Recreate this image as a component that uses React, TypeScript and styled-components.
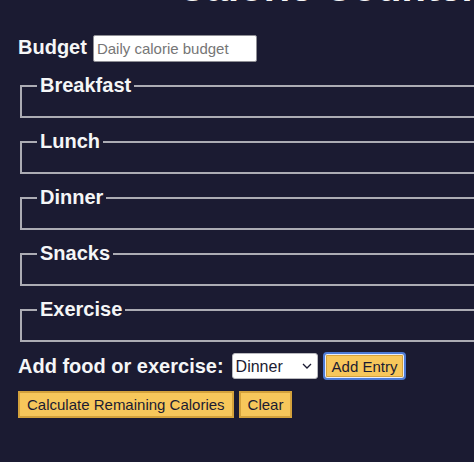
import React from "react";
import styled, { createGlobalStyle } from "styled-components";

const GlobalStyle = createGlobalStyle`
  html,
  body {
    margin: 0;
    padding: 0;
    overflow: hidden;
    background-color: #1b1b32;
  }

  body {
    color: #f5f6f7;
    font-family: "Liberation Sans", Arial, Helvetica, sans-serif;
  }
`;

const meals = ["Breakfast", "Lunch", "Dinner", "Snacks", "Exercise"];

const App = () => {
  return (
    <>
      <GlobalStyle />
      <Page>
        <Title>Calorie Counter</Title>
        <Container>
          <BudgetRow>
            <Label htmlFor="budget">Budget</Label>
            <BudgetInput
              id="budget"
              type="number"
              placeholder="Daily calorie budget"
            />
          </BudgetRow>
          <FieldsetList>
            {meals.map((meal) => (
              <Fieldset key={meal}>
                <Legend>{meal}</Legend>
              </Fieldset>
            ))}
          </FieldsetList>
          <AddRow>
            <Label htmlFor="entry-dropdown">Add food or exercise:</Label>
            <SelectWrapper>
              <Select id="entry-dropdown" defaultValue="dinner">
                <option value="breakfast">Breakfast</option>
                <option value="lunch">Lunch</option>
                <option value="dinner">Dinner</option>
                <option value="snacks">Snacks</option>
                <option value="exercise">Exercise</option>
              </Select>
              <Chevron viewBox="0 0 10 6" aria-hidden="true">
                <path d="M1 1l4 4 4-4" />
              </Chevron>
            </SelectWrapper>
            <Button type="button" $focused>
              Add Entry
            </Button>
          </AddRow>
          <ButtonRow>
            <Button type="button">Calculate Remaining Calories</Button>
            <Button type="button">Clear</Button>
          </ButtonRow>
        </Container>
      </Page>
    </>
  );
};

// the page is scrolled a little, so the title only peeks in at the top
const Page = styled.div`
  width: 618px;
  margin: -36px 0 0 18px;
`;

const Title = styled.h1`
  margin: 0 0 25px;
  font-size: 40px;
  line-height: 46px;
  font-weight: bold;
  text-align: center;
  white-space: nowrap;
`;

const Container = styled.div`
  display: flex;
  flex-direction: column;
`;

const Label = styled.label`
  font-size: 20px;
  line-height: 23px;
  font-weight: bold;
  white-space: nowrap;
`;

const BudgetRow = styled.div`
  display: flex;
  align-items: baseline;
  gap: 6px;
  margin-bottom: 12px;
`;

const BudgetInput = styled.input`
  box-sizing: border-box;
  width: 164px;
  height: 27px;
  padding: 0 3px;
  border: 1px solid #8f8f95;
  border-radius: 2px;
  background: #fff;
  color: #1b1b32;
  font-family: inherit;
  font-size: 15px;

  &::placeholder {
    color: #767676;
  }

  &::-webkit-outer-spin-button,
  &::-webkit-inner-spin-button {
    -webkit-appearance: none;
    margin: 0;
  }
`;

const FieldsetList = styled.div`
  display: flex;
  flex-direction: column;
  gap: 12px;
`;

const Fieldset = styled.fieldset`
  margin: 0 2px;
  min-width: 0;
  padding: 7px 15px 12px;
  border: 2px solid #acacb4;
`;

const Legend = styled.legend`
  padding: 0 3px;
  font-size: 20px;
  line-height: 23px;
  font-weight: bold;
`;

const AddRow = styled.div`
  display: flex;
  align-items: center;
  margin-top: 10px;
  height: 28px;

  & > label {
    margin-right: 8px;
  }

  & > button {
    margin-left: 5px;
  }
`;

const SelectWrapper = styled.div`
  position: relative;
  display: flex;
`;

const Select = styled.select`
  box-sizing: border-box;
  width: 86px;
  height: 26px;
  padding: 0 18px 0 3px;
  border: 1px solid #b9b9be;
  border-radius: 3px;
  background: #fff;
  color: #1b1b32;
  font-family: inherit;
  font-size: 16px;
  appearance: none;
  -webkit-appearance: none;
`;

const Chevron = styled.svg`
  position: absolute;
  right: 6px;
  top: 10px;
  width: 10px;
  height: 6px;
  fill: none;
  stroke: #1b1b32;
  stroke-width: 1.3;
  pointer-events: none;
`;

const ButtonRow = styled.div`
  display: flex;
  gap: 5px;
  margin-top: 11px;
`;

const Button = styled.button<{ $focused?: boolean }>`
  box-sizing: border-box;
  height: ${(p) => (p.$focused ? "28px" : "27px")};
  padding: 0 7px;
  border: 2px solid ${(p) => (p.$focused ? "#4d7bd6" : "#d4a23c")};
  border-radius: ${(p) => (p.$focused ? "4px" : "0")};
  box-shadow: ${(p) =>
    p.$focused ? "inset 0 0 0 1px #e9eefa, inset 0 0 0 2px #d4a23c" : "none"};
  background-color: #f7c75b;
  color: #1b1b32;
  font-family: inherit;
  font-size: 15px;
  white-space: nowrap;
  cursor: pointer;
`;

export default App;
